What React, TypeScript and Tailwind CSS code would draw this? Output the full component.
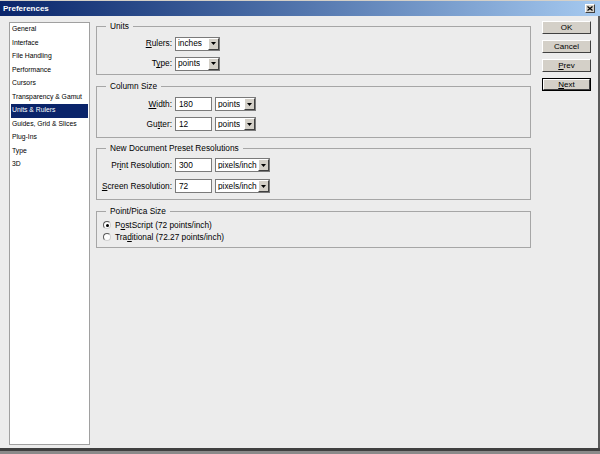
import React from "react";

const items = [
  "General",
  "Interface",
  "File Handling",
  "Performance",
  "Cursors",
  "Transparency & Gamut",
  "Units & Rulers",
  "Guides, Grid & Slices",
  "Plug-Ins",
  "Type",
  "3D",
];

function Arrow() {
  return (
    <div className="w-[11px] h-[12px] bg-[#d4d0c8] border border-t-white border-l-white border-b-[#404040] border-r-[#404040] flex items-center justify-center">
      <svg width="5" height="3" viewBox="0 0 5 3">
        <polygon points="0,0 5,0 2.5,3" fill="#000" />
      </svg>
    </div>
  );
}

function Select({ value, wClass }: { value: string; wClass: string }) {
  return (
    <div className={"h-[14px] bg-white border border-[#7a7a7a] flex items-center justify-between pl-[2px] " + wClass}>
      <span className="leading-none whitespace-nowrap overflow-hidden">{value}</span>
      <Arrow />
    </div>
  );
}

function Input({ value }: { value: string }) {
  return (
    <div className="h-[14px] w-[37px] bg-white border border-[#7a7a7a] flex items-center pl-[3px]">
      <span className="leading-none">{value}</span>
    </div>
  );
}

function Group({ title, children, cls }: { title: string; children: React.ReactNode; cls: string }) {
  return (
    <fieldset className={"border border-[#a6a6a6] " + cls}>
      <legend className="ml-[9px] px-[4px] leading-[10px] h-[10px]">{title}</legend>
      {children}
    </fieldset>
  );
}

function Label({ children }: { children: React.ReactNode }) {
  return <div className="w-[75px] text-right leading-none whitespace-nowrap">{children}</div>;
}

function Btn({ children, def }: { children: React.ReactNode; def?: boolean }) {
  return (
    <div className={"w-[49px] h-[13px] " + (def ? "border border-black" : "")}>
      <div className="w-full h-full bg-[#d4d0c8] border border-t-white border-l-white border-b-[#404040] border-r-[#404040] flex items-center justify-center leading-none text-[8px]">
        {children}
      </div>
    </div>
  );
}

function Radio({ checked }: { checked?: boolean }) {
  return (
    <div className="w-[8px] h-[8px] rounded-full border border-[#5a5a5a] border-b-[#d0d0d0] border-r-[#d0d0d0] bg-white flex items-center justify-center">
      {checked && <div className="w-[3px] h-[3px] rounded-full bg-black" />}
    </div>
  );
}

export default function App() {
  return (
    <div className="w-[600px] h-[454px] bg-[#ececec] flex flex-col font-['Liberation_Sans',Arial,sans-serif] text-[8.3px] text-black overflow-hidden">
      <div className="h-[16px] shrink-0 bg-gradient-to-r from-[#0a246a] to-[#a6caf0] flex items-center justify-between pl-[3px] pr-[5px] border-t border-[#d4d0c8]">
        <span className="text-white font-bold text-[8px] leading-none">Preferences</span>
        <div className="w-[10px] h-[9px] bg-[#d4d0c8] border border-t-white border-l-white border-b-[#404040] border-r-[#404040] flex items-center justify-center">
          <svg width="6" height="5" viewBox="0 0 6 5">
            <path d="M0.5 0.5 L5.5 4.5 M5.5 0.5 L0.5 4.5" stroke="#000" strokeWidth="1.2" />
          </svg>
        </div>
      </div>
      <div className="flex-1 flex items-start pl-[9px] border-r-2 border-[#5a5a5a]">
        <div className="mt-[6px] w-[81px] h-[423px] bg-white border border-[#a0a0a0] pt-0 px-px shrink-0 text-[6.8px]">
          {items.map((it) => (
            <div
              key={it}
              className={
                "h-[13.5px] flex items-center pl-[1px] leading-none whitespace-nowrap " +
                (it === "Units & Rulers" ? "bg-[#0a246a] text-white" : "")
              }
            >
              {it}
            </div>
          ))}
        </div>
        <div className="ml-[6px] mt-[5px] w-[435px] flex flex-col shrink-0">
          <Group title="Units" cls="pt-[6px] pb-[4px]">
            <div className="flex flex-col gap-[7px]">
              <div className="flex items-center h-[13px] gap-[3px]">
                <Label><u>R</u>ulers:</Label>
                <Select value="inches" wClass="w-[45px]" />
              </div>
              <div className="flex items-center h-[13px] gap-[3px]">
                <Label>T<u>y</u>pe:</Label>
                <Select value="points" wClass="w-[45px]" />
              </div>
            </div>
          </Group>
          <Group title="Column Size" cls="mt-[6px] pt-[6px] pb-[6px]">
            <div className="flex flex-col gap-[6px]">
              <div className="flex items-center h-[14px] gap-[3px]">
                <Label><u>W</u>idth:</Label>
                <Input value="180" />
                <Select value="points" wClass="w-[41px]" />
              </div>
              <div className="flex items-center h-[14px] gap-[3px]">
                <Label>Gu<u>t</u>ter:</Label>
                <Input value="12" />
                <Select value="points" wClass="w-[41px]" />
              </div>
            </div>
          </Group>
          <Group title="New Document Preset Resolutions" cls="mt-[5px] pt-[5px] pb-[6px]">
            <div className="flex flex-col gap-[7px]">
              <div className="flex items-center h-[14px] gap-[3px]">
                <Label>Pr<u>i</u>nt Resolution:</Label>
                <Input value="300" />
                <Select value="pixels/inch" wClass="w-[55px]" />
              </div>
              <div className="flex items-center h-[14px] gap-[3px]">
                <Label><u>S</u>creen Resolution:</Label>
                <Input value="72" />
                <Select value="pixels/inch" wClass="w-[55px]" />
              </div>
            </div>
          </Group>
          <Group title="Point/Pica Size" cls="mt-[6px] pt-[3px] pb-[4px]">
            <div className="flex flex-col pl-[6px]">
              <div className="flex items-center h-[12px] gap-[4px]">
                <Radio checked />
                <span className="leading-none">P<u>o</u>stScript (72 points/inch)</span>
              </div>
              <div className="flex items-center h-[12px] gap-[4px]">
                <Radio />
                <span className="leading-none">Tra<u>d</u>itional (72.27 points/inch)</span>
              </div>
            </div>
          </Group>
        </div>
        <div className="ml-[11px] mt-[5px] flex flex-col gap-[6px] shrink-0">
          <Btn>OK</Btn>
          <Btn>Cancel</Btn>
          <Btn><u>P</u>rev</Btn>
          <Btn def><u>N</u>ext</Btn>
        </div>
      </div>
      <div className="h-[3px] shrink-0 bg-[#404040]" />
      <div className="h-[3px] shrink-0 bg-[#8a8a8a]" />
    </div>
  );
}
